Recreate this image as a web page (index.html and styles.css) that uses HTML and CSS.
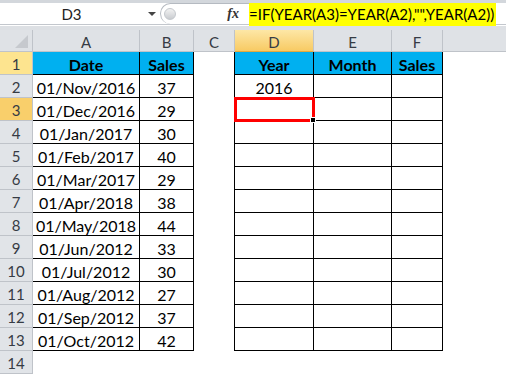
FILE: index.html
```html
<!DOCTYPE html>
<html lang="en">
<head>
    <meta charset="UTF-8">
    <title>Year formula</title>
    <link rel="stylesheet" href="styles.css">
</head>
<body>

    <div class="formula-bar">
        <div class="name-box">
            <span class="name">D3</span>
            <span class="arrow"></span>
        </div>
        <div class="fx-box">
            <span class="knob"></span>
            <span class="fx">fx</span>
        </div>
        <div class="formula">
            <span class="formula-text">=IF(YEAR(A3)=YEAR(A2),"",YEAR(A2))</span>
        </div>
    </div>

    <div class="sheet">
        <!-- column headers -->
        <div class="corner"><span class="tri"></span></div>
        <div class="col-head">A</div>
        <div class="col-head">B</div>
        <div class="col-head">C</div>
        <div class="col-head active">D</div>
        <div class="col-head">E</div>
        <div class="col-head">F</div>
        <div class="col-head last"></div>

        <!-- row 1 -->
        <div class="row-head hover">1</div>
        <div class="t th">Date</div>
        <div class="t th">Sales</div>
        <div class="gap"></div>
        <div class="t th">Year</div>
        <div class="t th">Month</div>
        <div class="t th">Sales</div>
        <div></div>

        <div class="row-head">2</div>
        <div class="t">01/Nov/2016</div>
        <div class="t">37</div>
        <div class="gap"></div>
        <div class="t">2016</div>
        <div class="t"></div>
        <div class="t"></div>
        <div></div>

        <div class="row-head active">3</div>
        <div class="t">01/Dec/2016</div>
        <div class="t">29</div>
        <div class="gap"></div>
        <div class="t selected"><span class="sel-box"></span><span class="sel-handle"></span></div>
        <div class="t"></div>
        <div class="t"></div>
        <div></div>

        <div class="row-head">4</div>
        <div class="t">01/Jan/2017</div>
        <div class="t">30</div>
        <div class="gap"></div>
        <div class="t"></div>
        <div class="t"></div>
        <div class="t"></div>
        <div></div>

        <div class="row-head">5</div>
        <div class="t">01/Feb/2017</div>
        <div class="t">40</div>
        <div class="gap"></div>
        <div class="t"></div>
        <div class="t"></div>
        <div class="t"></div>
        <div></div>

        <div class="row-head">6</div>
        <div class="t">01/Mar/2017</div>
        <div class="t">29</div>
        <div class="gap"></div>
        <div class="t"></div>
        <div class="t"></div>
        <div class="t"></div>
        <div></div>

        <div class="row-head">7</div>
        <div class="t">01/Apr/2018</div>
        <div class="t">38</div>
        <div class="gap"></div>
        <div class="t"></div>
        <div class="t"></div>
        <div class="t"></div>
        <div></div>

        <div class="row-head">8</div>
        <div class="t">01/May/2018</div>
        <div class="t">44</div>
        <div class="gap"></div>
        <div class="t"></div>
        <div class="t"></div>
        <div class="t"></div>
        <div></div>

        <div class="row-head">9</div>
        <div class="t">01/Jun/2012</div>
        <div class="t">33</div>
        <div class="gap"></div>
        <div class="t"></div>
        <div class="t"></div>
        <div class="t"></div>
        <div></div>

        <div class="row-head">10</div>
        <div class="t">01/Jul/2012</div>
        <div class="t">30</div>
        <div class="gap"></div>
        <div class="t"></div>
        <div class="t"></div>
        <div class="t"></div>
        <div></div>

        <div class="row-head">11</div>
        <div class="t">01/Aug/2012</div>
        <div class="t">27</div>
        <div class="gap"></div>
        <div class="t"></div>
        <div class="t"></div>
        <div class="t"></div>
        <div></div>

        <div class="row-head">12</div>
        <div class="t">01/Sep/2012</div>
        <div class="t">37</div>
        <div class="gap"></div>
        <div class="t"></div>
        <div class="t"></div>
        <div class="t"></div>
        <div></div>

        <div class="row-head">13</div>
        <div class="t">01/Oct/2012</div>
        <div class="t">42</div>
        <div class="gap"></div>
        <div class="t"></div>
        <div class="t"></div>
        <div class="t"></div>
        <div></div>

        <div class="row-head">14</div>
        <div></div>
        <div></div>
        <div></div>
        <div></div>
        <div></div>
        <div></div>
        <div></div>
    </div>

</body>
</html>
```

FILE: styles.css
```css
body {
    margin: 0;
    background-color: #ffffff;
    font-family: Lato, "Liberation Sans", sans-serif;
    color: #000000;
    overflow: hidden;
}

/* formula bar */
.formula-bar {
    height: 30px;
    box-sizing: border-box;
    padding-top: 3px;
    display: flex;
    background: linear-gradient(to bottom, #d3d7dc 0 3px, #ffffff 3px 24px, #c3c7cd 24px 25px, #ffffff 25px 26px, #dde0e4 26px);
}

.name-box {
    width: 158px;
    height: 21px;
    display: flex;
    align-items: center;
}

.name {
    width: 143px;
    text-align: center;
    font-size: 15px;
    color: #222222;
}

.arrow {
    width: 0;
    height: 0;
    border-left: 4px solid transparent;
    border-right: 4px solid transparent;
    border-top: 4px solid #444444;
    margin-left: 5px;
}

.fx-box {
    width: 89px;
    height: 21px;
    margin-left: 2px;
    box-sizing: border-box;
    border-top: 1px solid #b5bac1;
    border-left: 1px solid #b5bac1;
    border-radius: 11px 0 0 11px;
    display: flex;
    align-items: center;
    justify-content: space-between;
    padding: 0 10px 0 3px;
}

.knob {
    width: 10px;
    height: 10px;
    border-radius: 50%;
    background: linear-gradient(to bottom, #f2f2f2, #c9ccd0);
    border: 1px solid #c4c8cd;
}

.fx {
    font-family: "Liberation Serif", serif;
    font-style: italic;
    font-weight: bold;
    font-size: 14px;
    color: #333333;
}

.formula {
    flex: 1;
    height: 23px;
}

.formula-text {
    display: inline-block;
    height: 23px;
    line-height: 23px;
    background-color: #ffff00;
    font-size: 15px;
    padding-right: 2px;
}

/* sheet grid */
.sheet {
    display: grid;
    grid-template-columns: 33px 107px 54px 41px 79px 78px 51px 1fr;
    grid-template-rows: 22px repeat(14, 23px);
    font-size: 16px;
}

.sheet > div {
    box-sizing: border-box;
    display: flex;
    align-items: center;
    justify-content: center;
    padding-top: 2px;
}

.corner {
    position: relative;
    background-color: #dfe2e6;
    border-right: 1px solid #bfc3c9;
    border-bottom: 1px solid #bfc3c9;
}

.tri {
    position: absolute;
    right: 4px;
    bottom: 3px;
    width: 0;
    height: 0;
    border-left: 13px solid transparent;
    border-bottom: 13px solid #c6c9ce;
}

.col-head {
    background-color: #dfe2e6;
    border-right: 1px solid #bfc3c9;
    border-bottom: 1px solid #bfc3c9;
    color: #363b44;
    font-size: 15px;
}

.col-head.active {
    background: linear-gradient(to bottom, #fde7a6, #f8ca63);
    border-bottom: 1px solid #e2a93e;
}

.col-head.last {
    border-right: none;
}

.row-head {
    background-color: #e1e4e8;
    border-right: 1px solid #bfc3c9;
    border-bottom: 1px solid #bfc3c9;
    color: #363b44;
    font-size: 15px;
}

.row-head.hover {
    background-color: #fde48f;
}

.row-head.active {
    background-color: #f9cf6b;
}

.t {
    border-right: 1px solid #000000;
    border-bottom: 1px solid #000000;
}

.th {
    background-color: #00b0f0;
    font-weight: bold;
}

.gap {
    border-right: 1px solid #000000;
}

.selected {
    position: relative;
}

.sel-box {
    position: absolute;
    top: -1px;
    left: -1px;
    right: -2px;
    bottom: -2px;
    border: 3px solid #ff0000;
}

.sel-handle {
    position: absolute;
    right: -3px;
    bottom: -3px;
    width: 4px;
    height: 4px;
    background-color: #000000;
    border: 1px solid #ffffff;
}
```
